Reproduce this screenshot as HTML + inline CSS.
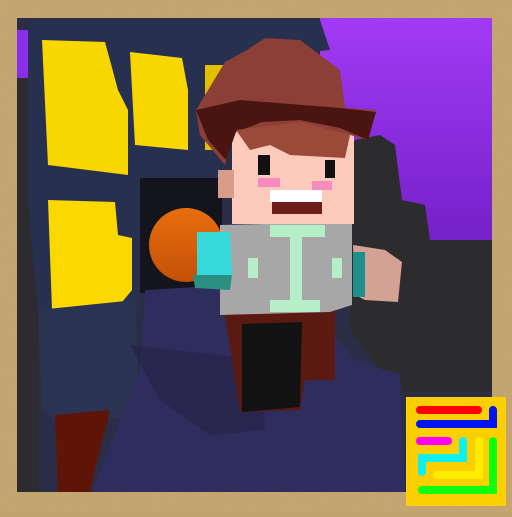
<!DOCTYPE html><html><head><style>body{margin:0;width:512px;height:512px;overflow:hidden;background:#c1a36d}</style></head><body>
<svg width="512" height="512" viewBox="0 0 512 512" xmlns="http://www.w3.org/2000/svg">
<defs><linearGradient id="sky" x1="0" y1="0" x2="0" y2="1"><stop offset="0" stop-color="#a23af5"/><stop offset="1" stop-color="#7420c8"/></linearGradient>
<linearGradient id="ball" x1="0" y1="0" x2="0" y2="1"><stop offset="0" stop-color="#e86e0c"/><stop offset="1" stop-color="#c45008"/></linearGradient>
<filter id="f"><feTurbulence baseFrequency="0.9" numOctaves="2"/><feColorMatrix values="0 0 0 0 0.76 0 0 0 0 0.64 0 0 0 0 0.43 0 0 0 0.35 0"/></filter></defs>
<rect width="512" height="512" fill="#c1a36d"/>
<rect width="512" height="512" filter="url(#f)" opacity="0.5"/>
<rect x="17" y="18" width="475" height="474" fill="#2a2d45"/>
<rect x="320" y="18" width="172" height="225" fill="url(#sky)"/>
<rect x="17" y="30" width="14" height="50" fill="#8a2ee8"/>
<polygon points="355,140 380,135 395,145 402,200 425,205 430,240 492,240 492,392 400,392 380,370 350,330 350,150" fill="#2c2c2e"/>
<rect x="17" y="78" width="22" height="414" fill="#2b2b30"/>
<polygon points="28,20 320,20 330,50 225,60 225,180 140,180 140,310 38,310 28,200" fill="#283050"/>
<rect x="140" y="178" width="82" height="115" fill="#13141c"/>
<polygon points="42,40 105,42 118,90 128,110 128,175 48,165" fill="#f8d600"/>
<polygon points="130,52 182,58 188,90 188,150 135,145" fill="#f8d600"/>
<rect x="205" y="65" width="22" height="85" fill="#e2c000"/>
<polygon points="48,200 115,202 118,235 132,238 132,290 118,307 52,310" fill="#fbd800"/>
<polygon points="38,310 135,300 140,415 60,425 42,410" fill="#2a3352"/>
<polygon points="55,415 110,410 95,470 90,492 58,492" fill="#5e1508"/>
<polygon points="145,290 230,285 330,330 355,360 400,375 405,492 92,492 120,420 140,370" fill="#2f2c5e"/>
<polygon points="130,345 260,360 265,430 210,435 160,400" fill="#252249" opacity="0.7"/>
<circle cx="186" cy="245" r="37" fill="url(#ball)"/>
<polygon points="224,310 335,305 335,380 305,380 300,410 240,412 232,360" fill="#5a1a12"/>
<polygon points="242,324 302,322 300,407 242,412" fill="#121212"/>
<polygon points="220,225 352,222 352,305 330,312 220,315" fill="#a7a7a7"/>
<rect x="270" y="225" width="55" height="12" fill="#b6eec8"/><rect x="290" y="235" width="12" height="70" fill="#b6eec8"/><rect x="270" y="300" width="50" height="12" fill="#b6eec8"/>
<rect x="248" y="258" width="10" height="20" fill="#b6eec8"/><rect x="332" y="258" width="10" height="20" fill="#b6eec8"/>
<polygon points="197,232 230,232 232,275 197,275" fill="#36dada"/><polygon points="193,275 232,275 230,290 195,288" fill="#2a8f80"/>
<polygon points="353,245 385,250 402,262 398,302 365,300 355,295" fill="#d4a294"/><rect x="353" y="252" width="12" height="45" fill="#1e8f8a"/>
<rect x="232" y="128" width="122" height="96" fill="#fccabb"/>
<rect x="218" y="170" width="16" height="28" fill="#d89c8a"/>
<polygon points="196,110 225,62 247,50 265,38 300,40 340,70 345,108 376,110 368,140 350,135 300,125 270,140 235,130 225,165 200,135" fill="#8b3f36"/>
<polygon points="196,110 240,100 340,108 376,112 368,140 340,128 300,120 262,122 236,132 226,160 208,140" fill="#4a1410"/>
<polygon points="236,130 300,122 350,135 345,158 290,155 270,145 250,150" fill="#9b4a3a"/>
<rect x="258" y="155" width="12" height="20" fill="#111"/><rect x="325" y="160" width="10" height="18" fill="#111"/>
<rect x="258" y="178" width="22" height="9" fill="#f58bbf"/><rect x="312" y="181" width="20" height="9" fill="#f58bbf"/>
<rect x="270" y="190" width="52" height="12" fill="#fff"/><rect x="272" y="202" width="50" height="12" fill="#6e1e1a"/>
<rect x="406" y="397" width="100" height="109" fill="#fcd000"/>
<g stroke-linecap="round" fill="none" stroke-width="8">
<path d="M420 410H478" stroke="#f00"/>
<path d="M493 410V424H420" stroke="#0015f0"/>
<path d="M420 441H448" stroke="#f0f"/>
<path d="M463 441V458H422V472" stroke="#10f0f0"/>
<path d="M479 441V475H437" stroke="#ffec00"/>
<path d="M493 441V490H422" stroke="#10ff10"/>
</g>
</svg></body></html>
